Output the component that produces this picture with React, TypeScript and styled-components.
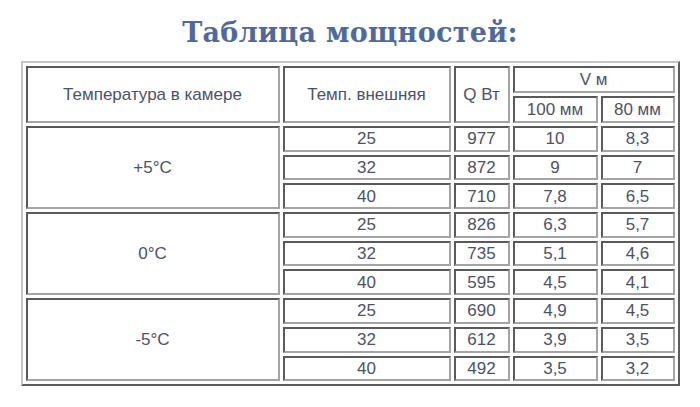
import React from "react";
import styled, { createGlobalStyle } from "styled-components";

const Global = createGlobalStyle`
  html, body { margin: 0; padding: 0; background: #ffffff; }
  body { width: 700px; height: 407px; overflow: hidden; }
`;

const Page = styled.div`
  display: flex;
  flex-direction: column;
  align-items: center;
  padding-top: 15px;
`;

const Title = styled.h2`
  margin: 0 0 11px 0;
  font-family: "DejaVu Serif", "Liberation Serif", serif;
  font-weight: bold;
  font-size: 27px;
  line-height: 35px;
  color: #50699a;
  letter-spacing: 0.3px;
`;

const Table = styled.table`
  border-collapse: separate;
  border-spacing: 3px;
  border-style: solid;
  border-width: 2px;
  border-color: #c4c4c4 #5c5c5c #5c5c5c #c4c4c4;
  table-layout: fixed;
  width: 659px;
  font-family: "Liberation Sans", Arial, sans-serif;
  font-size: 17px;
  color: #4d5267;
`;

const Cell = styled.td<{ $h?: number }>`
  box-sizing: border-box;
  border-style: solid;
  border-width: 2px;
  border-color: #5a5a5a #a4a4a4 #a4a4a4 #5a5a5a;
  padding: 0;
  text-align: center;
  vertical-align: middle;
  white-space: nowrap;
  height: ${(p) => p.$h ?? 25.7}px;
  line-height: 17px;
`;

type Group = { label: string; rows: [string, string, string, string][] };

const groups: Group[] = [
  {
    label: "+5°C",
    rows: [
      ["25", "977", "10", "8,3"],
      ["32", "872", "9", "7"],
      ["40", "710", "7,8", "6,5"],
    ],
  },
  {
    label: "0°C",
    rows: [
      ["25", "826", "6,3", "5,7"],
      ["32", "735", "5,1", "4,6"],
      ["40", "595", "4,5", "4,1"],
    ],
  },
  {
    label: "-5°C",
    rows: [
      ["25", "690", "4,9", "4,5"],
      ["32", "612", "3,9", "3,5"],
      ["40", "492", "3,5", "3,2"],
    ],
  },
];

const widths = [254, 168, 56, 85, 74];

export default function App() {
  return (
    <>
      <Global />
      <Page>
        <Title>Таблица мощностей:</Title>
        <Table>
          <colgroup>
            {widths.map((w) => (
              <col key={w} width={w} />
            ))}
          </colgroup>
          <tbody>
            <tr>
              <Cell rowSpan={2} $h={27}>Температура в камере</Cell>
              <Cell rowSpan={2} $h={27}>Темп. внешняя</Cell>
              <Cell rowSpan={2} $h={27}>Q Вт</Cell>
              <Cell colSpan={2} $h={27}>V м</Cell>
            </tr>
            <tr>
              <Cell $h={27}>100 мм</Cell>
              <Cell $h={27}>80 мм</Cell>
            </tr>
            {groups.map((g) =>
              g.rows.map((r, i) => (
                <tr key={g.label + i}>
                  {i === 0 && <Cell rowSpan={3}>{g.label}</Cell>}
                  {r.map((v, j) => (
                    <Cell key={j}>{v}</Cell>
                  ))}
                </tr>
              ))
            )}
          </tbody>
        </Table>
      </Page>
    </>
  );
}
